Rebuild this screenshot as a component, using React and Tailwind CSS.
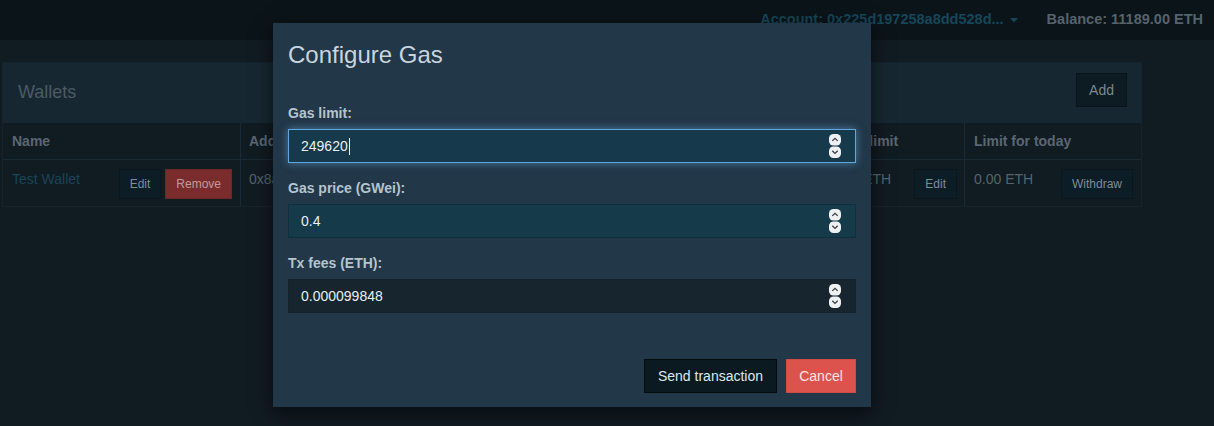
import React from "react";

function Spinner() {
  return (
    <svg width="14" height="25" viewBox="0 0 14 25" className="absolute right-[13px] top-1/2 -translate-y-1/2">
      <rect x="1" y="0.5" width="12" height="11.5" rx="4.5" fill="#eef0f1" />
      <path d="M4.3 7.4 L7 4.8 L9.7 7.4" stroke="#3a3f44" strokeWidth="1.3" fill="none" />
      <rect x="1" y="13" width="12" height="11.5" rx="4.5" fill="#eef0f1" />
      <path d="M4.3 17.3 L7 19.9 L9.7 17.3" stroke="#3a3f44" strokeWidth="1.3" fill="none" />
    </svg>
  );
}

function Field({ label, value, variant, caret }) {
  const cls =
    variant === "focus"
      ? "bg-[#163a4b] border-[#62a8dd] shadow-[0_0_8px_rgba(102,175,233,0.6)]"
      : variant === "normal"
      ? "bg-[#153a4a] border-[#11303e]"
      : "bg-[#17252f] border-[#16222b]";
  return (
    <div className="mb-[15px]">
      <div className="text-[14px] font-bold leading-[20px] text-[#b6c4ce] mb-[6px]">{label}</div>
      <div className={`relative h-[34px] border flex items-center pl-[12px] text-[14px] text-[#e8eff3] ${cls}`}>
        <span>{value}</span>
        {caret && <span className="inline-block w-[1px] h-[17px] bg-[#e8eff3] ml-[1px]" />}
        <Spinner />
      </div>
    </div>
  );
}

export default function App() {
  return (
    <div className="relative w-[1214px] h-[426px] overflow-hidden bg-[#111b22] font-['Liberation_Sans',Arial,sans-serif]">
      {/* navbar */}
      <div className="h-[40px] bg-[#0b1419] flex items-center justify-end pr-[11px] text-[14.5px] font-bold">
        <div className="flex items-center text-[#174658]">
          <span>Account: 0x225d197258a8dd528d...</span>
          <svg width="8" height="5" viewBox="0 0 8 5" className="ml-[6px]">
            <path d="M0 0 H8 L4 4.5 Z" fill="#174658" />
          </svg>
        </div>
        <div className="ml-[29px] text-[#56636c]">Balance: 11189.00 ETH</div>
      </div>

      {/* page */}
      <div className="pt-[22px] pl-[2px]">
        <div className="w-[1140px] border border-[#16232c]">
          <div className="h-[60px] bg-[#172731] flex items-start justify-between pl-[15px] pr-[14px]">
            <div className="text-[18px] leading-[20px] mt-[19px] text-[#4b5a65]">Wallets</div>
            <div className="mt-[10px] h-[34px] px-[12px] flex items-center bg-[#0d1b23] border border-[#08131a] text-[14px] text-[#7a8891]">Add</div>
          </div>
          <div className="grid grid-cols-[238px_200px_200px_183px_141px_1fr] text-[14px]">
            <div className="h-[37px] flex items-center px-[9px] font-bold text-[#5a6772] border-r border-b border-[#1a2a35]">Name</div>
            <div className="h-[37px] flex items-center px-[8px] font-bold text-[#5a6772] border-r border-b border-[#1a2a35]">Address</div>
            <div className="h-[37px] flex items-center px-[8px] font-bold text-[#5a6772] border-r border-b border-[#1a2a35]">Owners</div>
            <div className="h-[37px] flex items-center px-[8px] font-bold text-[#5a6772] border-r border-b border-[#1a2a35]">Balance</div>
            <div className="h-[37px] flex items-center px-[8px] font-bold text-[#5a6772] border-r border-b border-[#1a2a35]">Daily limit</div>
            <div className="h-[37px] flex items-center px-[9px] font-bold text-[#5a6772] border-b border-[#1a2a35]">Limit for today</div>

            <div className="h-[46px] flex justify-between pl-[9px] pt-[9px] pr-[8px] border-r border-[#1a2a35]">
              <span className="text-[#1a4558] leading-[20px]">Test Wallet</span>
              <div className="flex gap-[4px] shrink-0">
                <div className="h-[30px] px-[10px] flex items-center bg-[#0d1d26] border border-[#0a161d] text-[12px] text-[#7e8d96]">Edit</div>
                <div className="h-[30px] px-[10px] flex items-center bg-[#7a2c2c] border border-[#6e2626] text-[12px] text-[#c39a9a]">Remove</div>
              </div>
            </div>
            <div className="h-[46px] px-[8px] pt-[9px] leading-[20px] text-[#56636c] border-r border-[#1a2a35]">0x8a</div>
            <div className="h-[46px] px-[8px] pt-[9px] leading-[20px] text-[#56636c] border-r border-[#1a2a35]">2</div>
            <div className="h-[46px] px-[8px] pt-[9px] leading-[20px] text-[#56636c] border-r border-[#1a2a35]">0.00 ETH</div>
            <div className="h-[46px] flex justify-between pl-[8px] pr-[7px] pt-[9px] border-r border-[#1a2a35]">
              <span className="leading-[20px] text-[#56636c]">0.00 ETH</span>
              <div className="shrink-0 h-[30px] px-[10px] flex items-center bg-[#0d1d26] border border-[#0a161d] text-[12px] text-[#7e8d96]">Edit</div>
            </div>
            <div className="h-[46px] flex justify-between pl-[9px] pr-[8px] pt-[9px]">
              <span className="leading-[20px] text-[#56636c]">0.00 ETH</span>
              <div className="shrink-0 h-[30px] px-[10px] flex items-center bg-[#0d1d26] border border-[#0a161d] text-[12px] text-[#7e8d96]">Withdraw</div>
            </div>
          </div>
        </div>
      </div>

      {/* modal */}
      <div className="absolute left-[273px] top-[23px] w-[598px] h-[384px] bg-[#223748] shadow-[0_5px_18px_rgba(0,0,0,0.6)] px-[15px] flex flex-col">
        <div className="pt-[19px] text-[24px] leading-[26px] text-[#c9d5de]">Configure Gas</div>
        <div className="pt-[35px]">
          <Field label="Gas limit:" value="249620" variant="focus" caret />
          <Field label="Gas price (GWei):" value="0.4" variant="normal" />
          <Field label="Tx fees (ETH):" value="0.000099848" variant="disabled" />
        </div>
        <div className="flex justify-end gap-[9px] mt-[31px]">
          <div className="h-[34px] w-[133px] flex items-center justify-center bg-[#0b1a21] border border-[#04090c] text-[14px] text-[#dce8ef]">Send transaction</div>
          <div className="h-[34px] w-[70px] flex items-center justify-center bg-[#dc524d] border border-[#d14a45] text-[14px] text-[#f6e6e6]">Cancel</div>
        </div>
      </div>
    </div>
  );
}
